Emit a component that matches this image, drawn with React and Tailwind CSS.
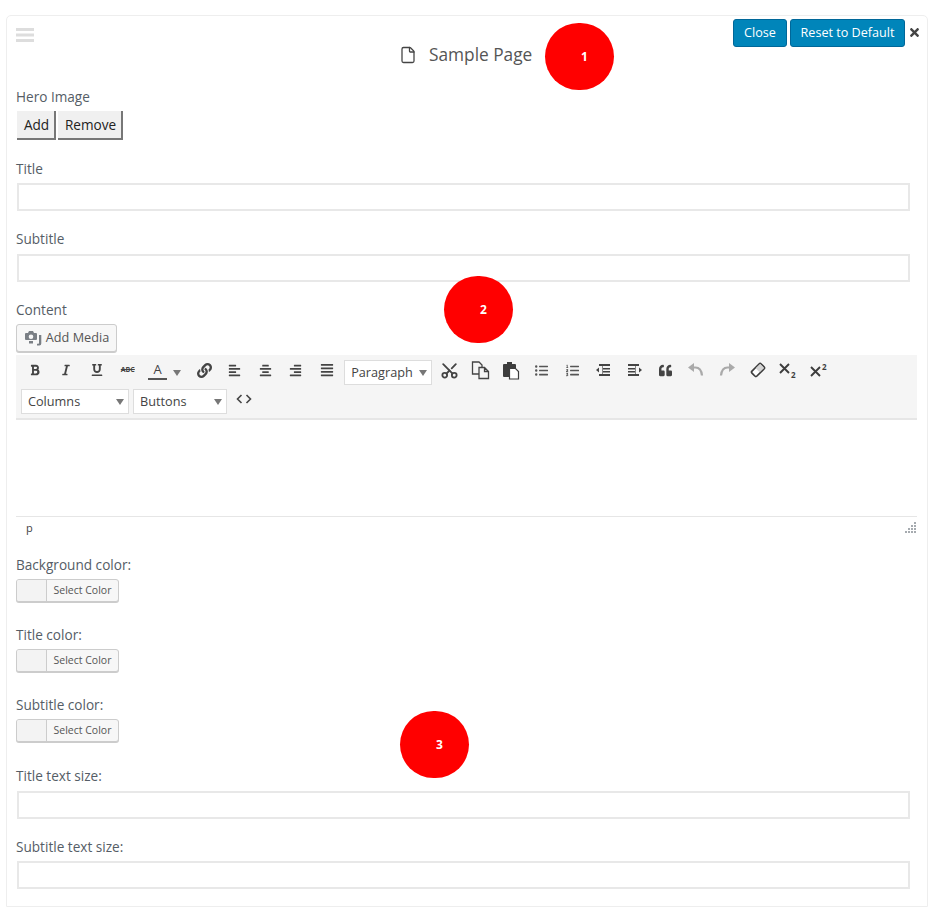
import { File, Scissors } from 'lucide-react';
import {
  FaBold, FaItalic, FaUnderline, FaLink, FaAlignLeft, FaAlignCenter, FaAlignRight,
  FaAlignJustify, FaListUl, FaListOl, FaQuoteLeft, FaTimes,
} from 'react-icons/fa';

function Label({ children, className = '' }) {
  return <div className={`h-[20px] text-[13.6px] leading-[20px] text-[#555d66] ${className}`}>{children}</div>;
}

function TextField({ className = '' }) {
  return <div className={`ml-px h-[28px] w-[893px] border-2 border-[#e8e8e8] bg-white ${className}`} />;
}

function ColorPicker({ className = '' }) {
  return (
    <div className={`flex h-[23px] w-[103px] overflow-hidden rounded-[3px] border border-[#cccccc] bg-[#f7f7f7] shadow-[0_1px_0_#cccccc] ${className}`}>
      <div className="w-[30px] border-r border-[#cccccc] bg-[#f3f3f3]" />
      <div className="flex-1 text-center text-[10.5px] leading-[21px] text-[#555555]">Select Color</div>
    </div>
  );
}

function Marker({ n, className }) {
  return (
    <div className={`absolute flex h-[67px] w-[69px] items-center justify-center rounded-full bg-[#ff0000] pl-[10px] text-[12px] font-bold text-white ${className}`}>
      {n}
    </div>
  );
}

function Caret() {
  return (
    <svg width="8" height="6" viewBox="0 0 8 6" fill="#777777">
      <path d="M0 0h8L4 6z" />
    </svg>
  );
}

function ToolSelect({ label, className = '' }) {
  return (
    <div className={`flex h-[25px] items-center justify-between border border-[#dddddd] bg-white pl-[6px] pr-[4px] text-[12.7px] text-[#444444] ${className}`}>
      <span>{label}</span>
      <Caret />
    </div>
  );
}

function Tool({ icon: Icon, size = 14, color = 'text-[#444444]', className = '' }) {
  return (
    <div className={`-mt-[5px] flex h-[25px] w-[30.8px] shrink-0 items-center justify-center ${color} ${className}`}>
      <Icon size={size} />
    </div>
  );
}

function MediaIcon() {
  return (
    <svg width="18" height="16" viewBox="0 0 18 16" fill="#7a7f85">
      <path fillRule="evenodd" d="M1 3h3l1-2h4l1 2h2a1 1 0 0 1 1 1v5a1 1 0 0 1-1 1H2a1 1 0 0 1-1-1V4a1 1 0 0 1 1-1zm6 1.500a2.300 2.300 0 1 0 0 4.600 2.300 2.300 0 0 0 0-4.600z" />
      <path d="M15 5h2.300v8.500a2 2 0 0 1-2 2H13v-1.800h1.400a.6.6 0 0 0 .6-.6z" />
      <path d="M5 11h4v2.500H5z" />
    </svg>
  );
}

function DragHandle() {
  return (
    <svg width="18" height="14" viewBox="0 0 18 14" fill="#dddddd" className="mt-[12px]">
      <path d="M0 0h18v3H0zM0 5.500h18v3H0zM0 11h18v3H0z" />
    </svg>
  );
}

function CutIcon({ size }) {
  return <Scissors size={size} strokeWidth={2.3} className="-rotate-90" />;
}

function CopyIcon() {
  return (
    <svg width="19" height="19" viewBox="0 0 19 19" fill="none" stroke="#444444" strokeWidth="1.300">
      <path d="M8 13H1.500V1h6.500l3 3v2.500" />
      <path d="M8 6.500h5.500l4 4v7H8zM13.500 6.500v4h4" />
    </svg>
  );
}

function PasteIcon() {
  return (
    <svg width="18" height="19" viewBox="0 0 18 19">
      <path fill="#3d3d3d" d="M5 3V1h5v2h3a1 1 0 0 1 1 1v11a1 1 0 0 1-1 1H2a1 1 0 0 1-1-1V4a1 1 0 0 1 1-1z" />
      <path fill="#ffffff" stroke="#3d3d3d" strokeWidth="1.200" d="M7.500 7.500h6l3 3v7.500h-9z" />
    </svg>
  );
}

function OutdentIcon() {
  return (
    <svg width="15" height="14" viewBox="0 0 15 14" fill="#444444">
      <path d="M3 1h11v2H3zM6 5h8v1.500H6zM6 8h8v1.500H6zM3 11h11v2H3zM0 7l3-2.500v5z" />
      <path d="M6 3h1v8H6z" fill="#888888" />
    </svg>
  );
}

function IndentIcon() {
  return (
    <svg width="15" height="14" viewBox="0 0 15 14" fill="#444444">
      <path d="M1 1h11v2H1zM1 5h8v1.500H1zM1 8h8v1.500H1zM1 11h11v2H1zM15 7l-3-2.500v5z" />
      <path d="M8 3h1v8H8z" fill="#888888" />
    </svg>
  );
}

function UndoIcon() {
  return (
    <svg width="16" height="16" viewBox="0 0 16 16" fill="#aaaaaa">
      <path d="M0 5.500 6 1v9z" />
      <path d="M5 5.500h2.500c4 0 6 3 6.500 8" fill="none" stroke="#aaaaaa" strokeWidth="2.200" />
    </svg>
  );
}

function RedoIcon() {
  return (
    <svg width="16" height="16" viewBox="0 0 16 16" fill="#aaaaaa">
      <path d="M16 5.500 10 1v9z" />
      <path d="M11 5.500H8.500c-4 0-6 3-6.500 8" fill="none" stroke="#aaaaaa" strokeWidth="2.200" />
    </svg>
  );
}

function EraserIcon() {
  return (
    <svg width="16" height="16" viewBox="0 0 16 16">
      <g transform="rotate(-45 8 8)">
        <rect x="1.500" y="4.500" width="13" height="7" rx="1.500" fill="#ffffff" stroke="#3d3d3d" strokeWidth="1.700" />
        <rect x="7.500" y="5.200" width="6.300" height="5.600" fill="#d4d4d4" />
      </g>
    </svg>
  );
}

function SubIcon() {
  return (
    <svg width="18" height="18" viewBox="0 0 18 18" fill="none">
      <path d="M1 3l9 9M10 3l-9 9" stroke="#3d3d3d" strokeWidth="1.900" />
      <text x="12" y="17" fontSize="8" fontWeight="700" fill="#3d3d3d">2</text>
    </svg>
  );
}

function SupIcon() {
  return (
    <svg width="18" height="18" viewBox="0 0 18 18" fill="none">
      <path d="M1 6l9 9M10 6l-9 9" stroke="#3d3d3d" strokeWidth="1.900" />
      <text x="12" y="9" fontSize="8" fontWeight="700" fill="#3d3d3d">2</text>
    </svg>
  );
}

export default function App() {
  return (
    <div className="h-[907px] w-[933px] overflow-hidden bg-white pl-[6px] pt-[15px] font-['Open_Sans',sans-serif]">
      <div className="relative h-[892px] w-[922px] rounded-t-[5px] border border-[#eeeeee] bg-white pl-[9px]">
        <Marker n="1" className="left-[538px] top-[7px]" />
        <Marker n="2" className="left-[437px] top-[260px]" />
        <Marker n="3" className="left-[393px] top-[695px]" />

        <div className="relative flex h-[71px] justify-between">
          <DragHandle />
          <div className="absolute left-[383px] top-[27px] flex items-center gap-[12px] text-[17.300px] leading-[24px] text-[#555555]">
            <File size={18} strokeWidth={1.7} className="text-[#444444]" />
            <span>Sample Page</span>
          </div>
          <div className="mr-[6px] mt-[3px] flex items-start">
            <div className="flex h-[28px] w-[54px] items-center justify-center rounded-[3px] border border-[#006799] bg-[#0085ba] text-[12.6px] text-white">Close</div>
            <div className="ml-[3px] flex h-[28px] w-[115px] items-center justify-center rounded-[3px] border border-[#006799] bg-[#0085ba] text-[12.6px] text-white">Reset to Default</div>
            <FaTimes size={13} className="ml-[3px] mt-[7px] text-[#444444]" />
          </div>
        </div>

        <Label>Hero Image</Label>
        <div className="ml-px mt-[4px] flex gap-[2px] text-[13.6px] text-[#222222]">
          <div className="flex h-[29px] w-[39px] items-center justify-center border-b-2 border-r-2 border-[#777777] bg-[#f0f0f0] pl-[2px] pt-[1px]">Add</div>
          <div className="flex h-[29px] w-[65px] items-center justify-center border-b-2 border-r-2 border-[#777777] bg-[#f0f0f0] pl-[2px] pt-[1px]">Remove</div>
        </div>

        <Label className="mt-[19px]">Title</Label>
        <TextField className="mt-[4px]" />
        <Label className="mt-[18px]">Subtitle</Label>
        <TextField className="mt-[5px]" />
        <Label className="mt-[18px]">Content</Label>

        <div className="mt-[4px] flex h-[28px] w-[101px] items-center justify-center gap-[4px] rounded-[3px] border border-[#cccccc] bg-[#f7f7f7] text-[12.7px] text-[#555555] shadow-[0_1px_0_#cccccc]">
          <MediaIcon />
          <span>Add Media</span>
        </div>

        <div className="mt-[3px] h-[65px] w-[901px] border-b-2 border-[#e6e6e6] bg-[#f5f5f5] pl-[4px]">
          <div className="flex h-[30px] items-center pt-[5px]">
            <Tool icon={FaBold} size={12} />
            <Tool icon={FaItalic} size={12} />
            <Tool icon={FaUnderline} size={12} />
            <div className="-mt-[5px] flex h-[25px] w-[30.8px] items-center justify-center text-[7px] font-bold text-[#444444] line-through">ABC</div>
            <div className="-mt-[5px] flex h-[25px] w-[50px] items-center pl-[5px] text-[#444444]">
              <span className="w-[19px] border-b-2 border-[#555555] text-center text-[13px] leading-[17px]">A</span>
              <span className="ml-[6px] mt-[5px]"><Caret /></span>
            </div>
            <Tool icon={FaLink} size={15} className="-ml-[4px] -mr-px" />
            <Tool icon={FaAlignLeft} size={13} />
            <Tool icon={FaAlignCenter} size={13} />
            <Tool icon={FaAlignRight} size={13} />
            <Tool icon={FaAlignJustify} size={14} />
            <ToolSelect label="Paragraph" className="ml-[2px] w-[88px]" />
            <Tool icon={CutIcon} size={19} className="ml-[2px]" />
            <Tool icon={CopyIcon} />
            <Tool icon={PasteIcon} />
            <Tool icon={FaListUl} size={13} color="text-[#555555]" />
            <Tool icon={FaListOl} size={13} color="text-[#555555]" />
            <Tool icon={OutdentIcon} />
            <Tool icon={IndentIcon} />
            <Tool icon={FaQuoteLeft} size={13} />
            <Tool icon={UndoIcon} />
            <Tool icon={RedoIcon} />
            <Tool icon={EraserIcon} />
            <Tool icon={SubIcon} />
            <Tool icon={SupIcon} />
          </div>
          <div className="mt-[4px] flex items-start pl-[1px]">
            <ToolSelect label="Columns" className="w-[108px]" />
            <ToolSelect label="Buttons" className="ml-[4px] w-[94px]" />
            <div className="ml-[7px] mt-[-3px] flex h-[25px] w-[20px] items-center justify-center text-[#444444]">
              <svg width="16" height="10" viewBox="0 0 16 10" fill="none" stroke="currentColor" strokeWidth="1.600">
                <path d="M5.500 1 1.500 5l4 4M10.500 1l4 4-4 4" />
              </svg>
            </div>
          </div>
        </div>

        <div className="h-[97px] w-[901px] border-b border-[#e6e6e6] bg-white" />
        <div className="flex h-[26px] w-[901px] items-center justify-between pl-[10px] pr-px">
          <span className="mb-[4px] text-[11px] text-[#444444]">p</span>
          <svg width="11" height="11" viewBox="0 0 11 11" fill="#a6abb0" className="mb-[6px]">
            <path d="M9 0h2v2H9zM6 3h2v2H6zM9 3h2v2H9zM3 6h2v2H3zM6 6h2v2H6zM9 6h2v2H9zM0 9h2v2H0zM3 9h2v2H3zM6 9h2v2H6zM9 9h2v2H9z" />
          </svg>
        </div>

        <Label className="mt-[12px]">Background color:</Label>
        <ColorPicker className="mt-[4px]" />
        <Label className="mt-[23px]">Title color:</Label>
        <ColorPicker className="mt-[4px]" />
        <Label className="mt-[23px]">Subtitle color:</Label>
        <ColorPicker className="mt-[4px]" />
        <Label className="mt-[24px]">Title text size:</Label>
        <TextField className="mt-[5px]" />
        <Label className="mt-[18px]">Subtitle text size:</Label>
        <TextField className="mt-[4px]" />
      </div>
    </div>
  );
}
